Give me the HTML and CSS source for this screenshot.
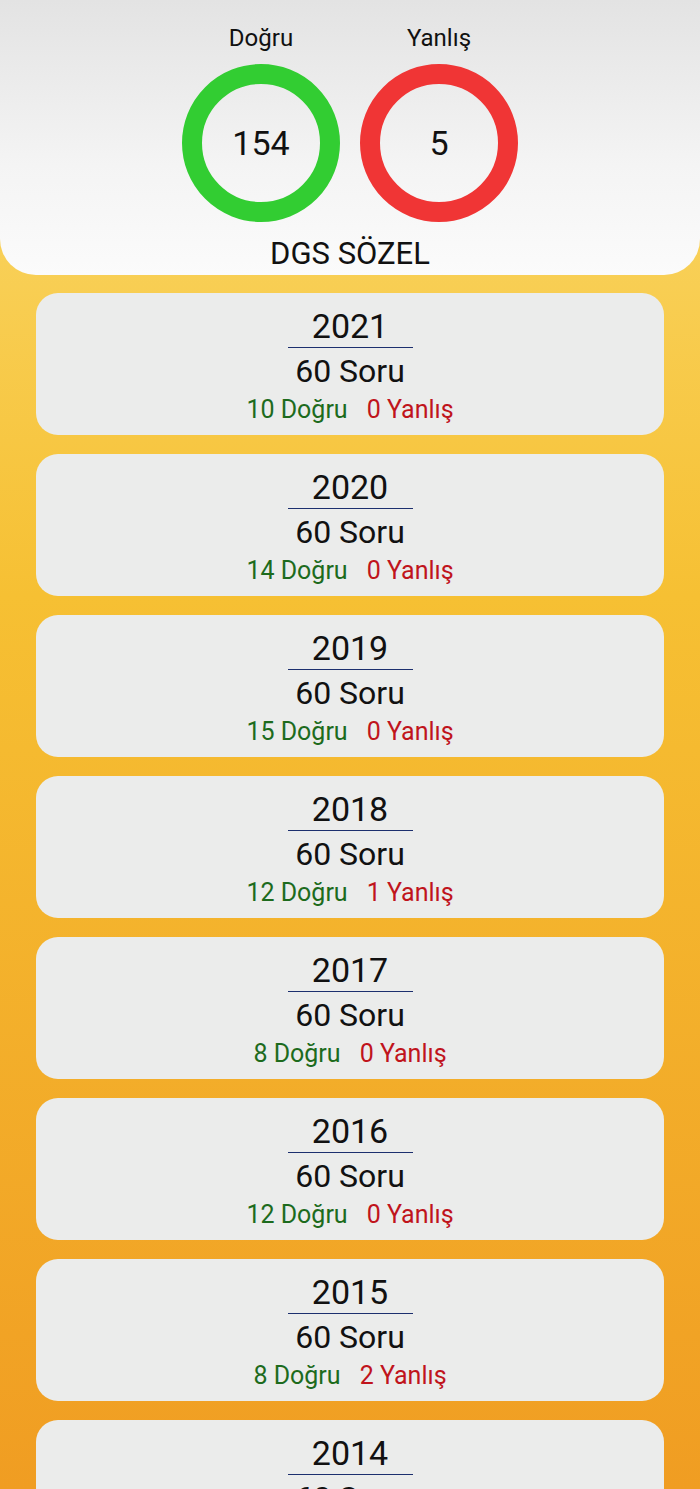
FILE: index.html
```html
<!DOCTYPE html>
<html lang="tr">
<head>
  <meta charset="UTF-8" />
  <meta name="viewport" content="width=device-width, initial-scale=1.0" />
  <title>DGS Sözel</title>
  <link rel="stylesheet" href="styles.css">
</head>
<body>
  <header class="summary">
    <div class="rings">
      <div class="ring-col">
        <div class="ring-label">Doğru</div>
        <div class="ring ring-green">154</div>
      </div>
      <div class="ring-col">
        <div class="ring-label">Yanlış</div>
        <div class="ring ring-red">5</div>
      </div>
    </div>
    <div class="title">DGS SÖZEL</div>
  </header>

  <main class="list">
    <div class="exam">
      <div class="year">2021</div>
      <div class="count">60 Soru</div>
      <div class="stats"><span class="ok">10 Doğru</span><span class="bad">0 Yanlış</span></div>
    </div>
    <div class="exam">
      <div class="year">2020</div>
      <div class="count">60 Soru</div>
      <div class="stats"><span class="ok">14 Doğru</span><span class="bad">0 Yanlış</span></div>
    </div>
    <div class="exam">
      <div class="year">2019</div>
      <div class="count">60 Soru</div>
      <div class="stats"><span class="ok">15 Doğru</span><span class="bad">0 Yanlış</span></div>
    </div>
    <div class="exam">
      <div class="year">2018</div>
      <div class="count">60 Soru</div>
      <div class="stats"><span class="ok">12 Doğru</span><span class="bad">1 Yanlış</span></div>
    </div>
    <div class="exam">
      <div class="year">2017</div>
      <div class="count">60 Soru</div>
      <div class="stats"><span class="ok">8 Doğru</span><span class="bad">0 Yanlış</span></div>
    </div>
    <div class="exam">
      <div class="year">2016</div>
      <div class="count">60 Soru</div>
      <div class="stats"><span class="ok">12 Doğru</span><span class="bad">0 Yanlış</span></div>
    </div>
    <div class="exam">
      <div class="year">2015</div>
      <div class="count">60 Soru</div>
      <div class="stats"><span class="ok">8 Doğru</span><span class="bad">2 Yanlış</span></div>
    </div>
    <div class="exam">
      <div class="year">2014</div>
      <div class="count">60 Soru</div>
      <div class="stats"><span class="ok">9 Doğru</span><span class="bad">0 Yanlış</span></div>
    </div>
  </main>
</body>
</html>
```

FILE: styles.css
```css
html, body {
  height: 100%;
}

body {
  margin: 0;
  padding: 0;
  font-family: Roboto, "Liberation Sans", sans-serif;
  color: #111;
  background: linear-gradient(180deg, #fadb70 0%, #f6c033 40%, #f09d22 100%);
  overflow: hidden;
}

.summary {
  height: 275px;
  box-sizing: border-box;
  padding-top: 24px;
  background: linear-gradient(180deg, #e3e3e3 0%, #f4f4f4 60%, #fbfbfb 100%);
  border-radius: 0 0 36px 36px;
  display: flex;
  flex-direction: column;
  align-items: center;
}

.rings {
  display: flex;
  gap: 20px;
}

.ring-col {
  display: flex;
  flex-direction: column;
  align-items: center;
  width: 158px;
}

.ring-label {
  font-size: 24px;
  line-height: 28px;
  height: 40px;
}

.ring {
  width: 158px;
  height: 158px;
  box-sizing: border-box;
  border-radius: 50%;
  border: 20px solid;
  display: flex;
  align-items: center;
  justify-content: center;
  font-size: 34px;
}

.ring-green {
  border-color: #32cd32;
}

.ring-red {
  border-color: #f03535;
}

.title {
  margin-top: 14px;
  font-size: 31px;
  line-height: 36px;
}

.list {
  display: flex;
  flex-direction: column;
  gap: 19px;
  padding: 18px 36px 0;
}

.exam {
  background: #ebeceb;
  border-radius: 22px;
  height: 142px;
  box-sizing: border-box;
  padding-top: 13px;
  display: flex;
  flex-direction: column;
  align-items: center;
}

.year {
  font-size: 34px;
  line-height: 40px;
  width: 125px;
  text-align: center;
  border-bottom: 1.5px solid #1c2f6e;
  padding-bottom: 1px;
}

.count {
  margin-top: 4px;
  font-size: 32px;
  line-height: 38px;
}

.stats {
  margin-top: 6px;
  font-size: 25px;
  line-height: 28px;
  display: flex;
  gap: 19px;
}

.ok {
  color: #1d6b1d;
}

.bad {
  color: #c0141c;
}
```
